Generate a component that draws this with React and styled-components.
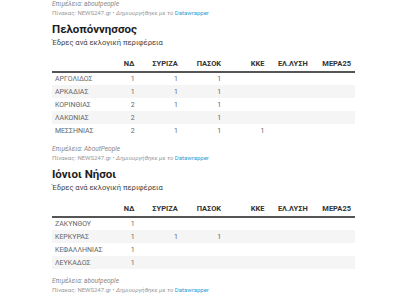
import React from 'react';
import styled, { createGlobalStyle } from 'styled-components';

const GlobalStyle = createGlobalStyle`
  html, body {
    margin: 0;
    padding: 0;
    overflow: hidden;
    background: #fff;
  }
  body {
    font-family: Roboto, "Liberation Sans", sans-serif;
    color: #333;
  }
`;

const Page = styled.div`
  width: 303px;
  margin-left: 52px;
`;

const Credit = styled.div`
  font-size: 6.5px;
  font-style: italic;
  line-height: 9px;
  color: #888;
`;

const Source = styled.div`
  font-size: 6px;
  line-height: 8px;
  color: #999;
  .made {
    font-style: italic;
  }
  a {
    color: #2a9fd6;
    text-decoration: none;
  }
`;

const Title = styled.h2`
  margin: 4px 0 0;
  font-size: 11.5px;
  font-weight: 700;
  line-height: 16px;
  color: #1d1d1d;
`;

const Subtitle = styled.p`
  margin: 1px 0 0;
  font-size: 7.6px;
  line-height: 10px;
  color: #444;
`;

const Table = styled.table`
  width: 100%;
  margin-top: 8px;
  border-collapse: collapse;
  table-layout: fixed;
  font-size: 7px;
`;

const HeadCell = styled.th`
  height: 15px;
  padding: 0 4px 0 0;
  font-size: 7.5px;
  font-weight: 700;
  color: #333;
  text-align: ${(props) => (props.left ? 'left' : 'right')};
  border-bottom: 2px solid #555;
`;

const Row = styled.tr`
  height: 13px;
  background: ${(props) => (props.striped ? '#f5f5f5' : '#fff')};
`;

const Cell = styled.td`
  padding: 0 4px 0 ${(props) => (props.left ? '3px' : '0')};
  color: #666;
  text-align: ${(props) => (props.left ? 'left' : 'right')};
  white-space: nowrap;
`;

const Footer = styled.div`
  margin-top: 8px;
`;

const parties = ['ΝΔ', 'ΣΥΡΙΖΑ', 'ΠΑΣΟΚ', 'ΚΚΕ', 'ΕΛ.ΛΥΣΗ', 'ΜΕΡΑ25'];

const regions = [
  {
    title: 'Πελοπόννησσος',
    credit: 'AboutPeople',
    rows: [
      ['ΑΡΓΟΛΙΔΟΣ', 1, 1, 1, '', '', ''],
      ['ΑΡΚΑΔΙΑΣ', 1, 1, 1, '', '', ''],
      ['ΚΟΡΙΝΘΙΑΣ', 2, 1, 1, '', '', ''],
      ['ΛΑΚΩΝΙΑΣ', 2, '', 1, '', '', ''],
      ['ΜΕΣΣΗΝΙΑΣ', 2, 1, 1, 1, '', ''],
    ],
  },
  {
    title: 'Ιόνιοι Νήσοι',
    credit: 'aboutpeople',
    rows: [
      ['ΖΑΚΥΝΘΟΥ', 1, '', '', '', '', ''],
      ['ΚΕΡΚΥΡΑΣ', 1, 1, 1, '', '', ''],
      ['ΚΕΦΑΛΛΗΝΙΑΣ', 1, '', '', '', '', ''],
      ['ΛΕΥΚΑΔΟΣ', 1, '', '', '', '', ''],
    ],
  },
  {
    title: 'Ήπειρος',
    credit: 'aboutpeople',
    rows: [
      ['ΑΡΤΗΣ', 1, 1, '', '', '', ''],
      ['ΘΕΣΠΡΩΤΙΑΣ', 1, '', '', '', '', ''],
      ['ΙΩΑΝΝΙΝΩΝ', 2, 1, 1, '', '', ''],
      ['ΠΡΕΒΕΖΗΣ', 1, 1, '', '', '', ''],
    ],
  },
];

function Attribution({ credit }) {
  return (
    <>
      <Credit>Επιμέλεια: {credit}</Credit>
      <Source>
        Πίνακας: NEWS247.gr • <span className="made">Δημιουργήθηκε με το</span>{' '}
        <a href="#">Datawrapper</a>
      </Source>
    </>
  );
}

function Region({ region }) {
  return (
    <section>
      <Title>{region.title}</Title>
      <Subtitle>Έδρες ανά εκλογική περιφέρεια</Subtitle>
      <Table>
        <thead>
          <tr>
            <HeadCell left />
            {parties.map((p) => (
              <HeadCell key={p}>{p}</HeadCell>
            ))}
          </tr>
        </thead>
        <tbody>
          {region.rows.map((row, i) => (
            <Row key={row[0]} striped={i % 2 === 1}>
              <Cell left>{row[0]}</Cell>
              {row.slice(1).map((v, j) => (
                <Cell key={j}>{v}</Cell>
              ))}
            </Row>
          ))}
        </tbody>
      </Table>
      <Footer>
        <Attribution credit={region.credit} />
      </Footer>
    </section>
  );
}

export default function App() {
  return (
    <>
      <GlobalStyle />
      <Page>
        <Attribution credit="aboutpeople" />
        {regions.map((r) => (
          <Region key={r.title} region={r} />
        ))}
      </Page>
    </>
  );
}
